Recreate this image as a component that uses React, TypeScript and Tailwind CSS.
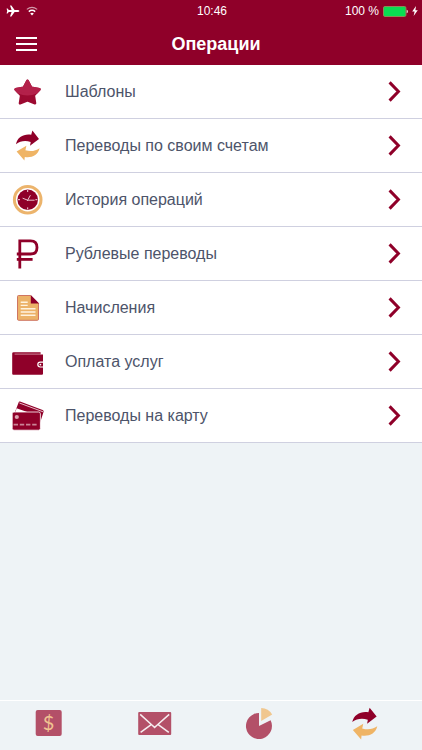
import type { ReactNode } from 'react';

function StarIcon() {
  return (
    <svg viewBox="0 0 33 33" className="h-[33px] w-[33px] shrink-0" aria-hidden="true">
      <path
        d="M15.5 5.8 19.2 12.8 27.4 14.4 21.8 20.4 23 28.2 15.5 25.4 8 28.2 9.2 20.4 3.6 14.4 11.8 12.8Z"
        fill="#9c0a31"
        stroke="#9c0a31"
        strokeWidth="2.6"
        strokeLinejoin="round"
      />
      <path
        d="M15.5 5.8 19.2 12.8 27.4 14.4 24.6 17.4Q15.5 21 6.4 17.4L3.6 14.4 11.8 12.8Z"
        fill="#b3214a"
        stroke="#b3214a"
        strokeWidth="2.6"
        strokeLinejoin="round"
      />
    </svg>
  );
}

function TransferIcon({ className = 'h-[33px] w-[33px]' }: { className?: string }) {
  return (
    <svg viewBox="0 0 33 33" className={`${className} shrink-0`} aria-hidden="true">
      <path d="M4 15.2C5.4 8 12 4.6 19.2 5.8L20.4 1.6 27 10 18 16.8 18.7 12.9C13 11.4 8.3 12 4 15.2Z" fill="#8f0029" />
      <path d="M27.6 19.2C26 26.2 19.6 29 12.8 27.9L12.4 31.6 4.6 22.6 14.4 16.8 13.4 21.2C18.8 22.8 23.4 22 27.6 19.2Z" fill="#efb465" />
    </svg>
  );
}

function ClockIcon() {
  return (
    <svg viewBox="0 0 33 33" className="h-[33px] w-[33px] shrink-0" fill="none" aria-hidden="true">
      <circle cx="15.7" cy="16.7" r="13.3" stroke="#ecb46c" strokeWidth="3" />
      <circle cx="15.7" cy="16.7" r="10.3" fill="#8f0029" />
      <path d="M15.7 7v2M15.7 24.4v2M6 16.7h2M23.4 16.7h2" stroke="#f3d9df" strokeWidth="1" />
      <path d="M15.2 18 18.4 12.2M10.6 15.2 15.7 17.2 22.6 17.2" stroke="#e9c3cc" strokeWidth="1" />
    </svg>
  );
}

function RubleIcon() {
  return (
    <svg viewBox="0 0 33 33" className="h-[33px] w-[33px] shrink-0" fill="none" stroke="#8f0029" strokeWidth="2.8" aria-hidden="true">
      <path d="M7.8 31.6V3.8H18.6C23 3.8 25 6.4 25 10.4S23 17 18.6 17H4.8" />
      <path d="M4.8 22.4H20.6" />
    </svg>
  );
}

function DocumentIcon() {
  return (
    <svg viewBox="0 0 33 33" className="h-[33px] w-[33px] shrink-0" aria-hidden="true">
      <path d="M6.5 4.5H18.5L26.5 12.5V28.2Q26.5 29.3 25.4 29.3H6.6Q5.5 29.3 5.5 28.2V5.5Q5.5 4.5 6.5 4.5Z" fill="#ecb268" stroke="#cf7561" strokeWidth="1" />
      <path d="M18.8 4 27.2 12.6H18.8Z" fill="#8f0029" />
      <path d="M8.7 11.2h7M8.7 14.4h7M8.7 17.7h14.8M8.7 21h14.8M8.7 24.3h14.8" stroke="#fff3df" strokeWidth="1.4" />
    </svg>
  );
}

function WalletIcon() {
  return (
    <svg viewBox="0 0 33 33" className="h-[33px] w-[33px] shrink-0" aria-hidden="true">
      <path d="M1.6 7.2H28.6V9.6H31V28.8Q31 29.8 30 29.8H1.2Q.2 29.8 .2 28.8V8.6Q.2 7.2 1.6 7.2Z" fill="#8f0029" />
      <path d="M2.6 9.1H29" stroke="#e0a9b6" strokeWidth=".8" />
      <path d="M31 17.2H28.2Q25.8 17.2 25.8 19.6T28.2 22H31" fill="#8f0029" stroke="#fff" strokeWidth="1.2" />
      <circle cx="28.4" cy="19.6" r=".9" fill="#fff" />
    </svg>
  );
}

function CardsIcon() {
  return (
    <svg viewBox="0 0 33 33" className="h-[33px] w-[33px] shrink-0" aria-hidden="true">
      <path d="M8 2.6 30.6 11Q32 11.6 31.6 12.8L28 24 3 13 6.6 3.4Q7 2.2 8 2.6Z" fill="#8f0029" />
      <path d="M7.4 4 31 12.8" stroke="#e6bcc6" strokeWidth="1" />
      <path d="M4.6 9.2 16.6 13.6H3.2Z" fill="#fff" />
      <path d="M.2 14.8Q.2 13 2 13H26.6Q28.4 13 28.4 14.8V29.4Q28.4 31.2 26.6 31.2H2Q.2 31.2 .2 29.4Z" fill="#8f0029" stroke="#fff" strokeWidth=".8" />
      <circle cx="4.8" cy="18" r="2.1" fill="#dca3b1" />
      <path d="M1.6 25.6H26.4" stroke="#c98496" strokeWidth="1.6" strokeDasharray="4.4 1.8" />
    </svg>
  );
}

function DollarIcon() {
  return (
    <svg viewBox="0 0 35 35" className="h-[35px] w-[35px]" aria-hidden="true">
      <rect x="4.7" y="4" width="26" height="26" rx="2" fill="#b35068" />
      <text x="17.5" y="24" textAnchor="middle" fontSize="20" fill="#f0c391" fontFamily="Lato, sans-serif">
        $
      </text>
    </svg>
  );
}

function MailIcon() {
  return (
    <svg viewBox="0 0 35 35" className="h-[35px] w-[35px]" fill="none" aria-hidden="true">
      <rect x="1.2" y="6" width="33" height="23" rx="1" fill="#b35068" />
      <path d="M3.2 8.4 15.2 19.2 17.6 21.4 20 19.2 32.2 8.4M3.6 26.4 14.2 18.6M31.8 26.4 21.2 18.6" stroke="#f6eef1" strokeWidth="1.5" />
    </svg>
  );
}

function ChartIcon() {
  return (
    <svg viewBox="0 0 35 35" className="h-[35px] w-[35px]" aria-hidden="true">
      <path d="M17 20V7A13 13 0 1 0 28.6 14.2Z" fill="#b35068" />
      <path d="M19.2 15V2A13 13 0 0 1 30.2 8.6Z" fill="#f0c78f" />
    </svg>
  );
}

const OPERATIONS: { label: string; icon: ReactNode }[] = [
  { label: 'Шаблоны', icon: <StarIcon /> },
  { label: 'Переводы по своим счетам', icon: <TransferIcon /> },
  { label: 'История операций', icon: <ClockIcon /> },
  { label: 'Рублевые переводы', icon: <RubleIcon /> },
  { label: 'Начисления', icon: <DocumentIcon /> },
  { label: 'Оплата услуг', icon: <WalletIcon /> },
  { label: 'Переводы на карту', icon: <CardsIcon /> },
];

const TABS: { label: string; icon: ReactNode }[] = [
  { label: 'Счета', icon: <DollarIcon /> },
  { label: 'Сообщения', icon: <MailIcon /> },
  { label: 'Статистика', icon: <ChartIcon /> },
  { label: 'Операции', icon: <TransferIcon className="h-[35px] w-[35px]" /> },
];

function StatusBar() {
  return (
    <div className="grid h-[22px] grid-cols-3 items-center pr-1 pl-1.5 text-xs">
      <div className="flex items-center gap-1.5">
        <svg viewBox="0 0 14 12" className="h-3 w-3.5" fill="#fff" aria-hidden="true">
          <path d="M13.4 6Q13.4 6.9 11.8 6.9H8.6L5.4 11.6H4L5.6 6.9H2.8L1.6 8.6H.6L1.2 6 .6 3.4H1.6L2.8 5.1H5.6L4 .4H5.4L8.6 5.1H11.8Q13.4 5.1 13.4 6Z" />
        </svg>
        <svg viewBox="0 0 12 10" className="h-2.5 w-3" fill="none" stroke="#fff" aria-hidden="true">
          <path d="M.8 3.4Q6-.8 11.2 3.4" strokeWidth="1.2" opacity=".6" />
          <path d="M2.8 5.6Q6 3 9.2 5.6" strokeWidth="1.5" />
          <path d="M4.2 7.4Q6 6 7.8 7.4L6 9.4Z" fill="#fff" stroke="none" />
        </svg>
      </div>
      <div className="text-center">10:46</div>
      <div className="flex items-center justify-end gap-1">
        <span className="whitespace-nowrap">100 %</span>
        <svg viewBox="0 0 25 11" className="h-[11px] w-[25px]" aria-hidden="true">
          <rect x=".5" y=".5" width="22.4" height="10" rx="1.4" fill="#0bdc52" stroke="#8d8a57" />
          <path d="M23.6 3.8Q25 4 25 5.5T23.6 7.2Z" fill="#e8c8cf" />
        </svg>
        <svg viewBox="0 0 6 10" className="h-2.5 w-1.5" fill="#fff" aria-hidden="true">
          <path d="M4 0 .2 5.6H2.6L1.6 10 5.8 4.2H3.4Z" />
        </svg>
      </div>
    </div>
  );
}

export default function App() {
  return (
    <div className="flex min-h-screen flex-col bg-[#eef3f6] font-['Liberation_Sans',Arial,sans-serif]">
      <header className="bg-[#8f0029] text-white">
        <StatusBar />
        <div className="grid h-[43px] grid-cols-[48px_1fr_38px] items-center">
          <button type="button" aria-label="Меню" className="flex flex-col gap-1 pl-4">
            <span className="h-0.5 w-[21px] bg-white" />
            <span className="h-0.5 w-[21px] bg-white" />
            <span className="h-0.5 w-[21px] bg-white" />
          </button>
          <h1 className="text-center text-lg leading-6 font-bold">Операции</h1>
        </div>
      </header>

      <main className="flex-1">
        <ul>
          {OPERATIONS.map((item) => (
            <li key={item.label}>
              <button
                type="button"
                className="flex h-[54px] w-full items-center gap-5 border-b border-[#cfd0e0] bg-white pr-[21px] pl-3 text-left"
              >
                {item.icon}
                <span className="flex-1 text-base leading-6 text-[#4d546a]">{item.label}</span>
                <svg viewBox="0 0 13 21" className="h-[21px] w-[13px] shrink-0" fill="none" aria-hidden="true">
                  <path d="M1.6 1.4 10.4 10.5 1.6 19.6" stroke="#8f0029" strokeWidth="3" />
                </svg>
              </button>
            </li>
          ))}
        </ul>
      </main>

      <nav className="grid h-[50px] grid-cols-4 border-t border-white pb-1">
        {TABS.map((tab) => (
          <button key={tab.label} type="button" aria-label={tab.label} className="flex items-center justify-center pr-2">
            {tab.icon}
          </button>
        ))}
      </nav>
    </div>
  );
}
